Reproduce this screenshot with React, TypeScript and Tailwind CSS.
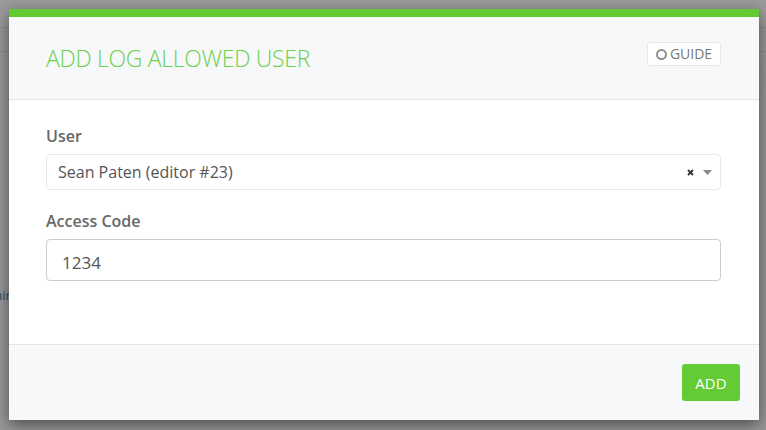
import React from "react";

export default function App() {
  return (
    <div
      className="relative w-[766px] h-[430px] overflow-hidden bg-[#999999]"
      style={{ fontFamily: '"Open Sans", "Liberation Sans", sans-serif' }}
    >
      {/* dimmed page behind the modal */}
      <div className="flex flex-col">
        <div className="h-[28px] border-b border-[#8e8e8e] bg-[#9b9b9b]" />
        <div className="h-[24px] border-b border-[#8e8e8e] bg-[#999999]" />
        <div className="flex justify-end pt-[13px] pr-[2px]">
          <div className="w-[40px] h-[24px] rounded-[3px] border border-[#8f8f8f]" />
        </div>
        <div className="pt-[198px] -ml-[26px] text-[13px] leading-[16px] text-[#2f4a66]">
          Admin
        </div>
      </div>

      {/* modal */}
      <div className="absolute left-[9px] top-[9px] w-[750px] flex flex-col bg-white shadow-[0_5px_15px_rgba(0,0,0,0.5)]">
        <div className="h-[8px] bg-[#62cb31]" />

        <div className="h-[83px] border-b border-[#e4e5e7] bg-[#f7f8fa] flex justify-between pl-[37px] pr-[38px]">
          <h1 className="self-center text-[23px] leading-[31px] font-light text-[#6bd04a] tracking-[-0.3px]">
            ADD LOG ALLOWED USER
          </h1>
          <button className="mt-[25px] h-[24px] w-[74px] flex items-center justify-center gap-[3px] rounded-[3px] border border-[#e6e6e6] bg-white text-[14px] leading-[20px] text-[#777777]">
            <span className="inline-block w-[11px] h-[11px] rounded-full border-2 border-[#8f8f8f]" />
            <span>GUIDE</span>
          </button>
        </div>

        <div className="h-[244px] flex flex-col pt-[25px] pl-[37px] pr-[38px]">
          <label className="text-[16px] leading-[22px] font-semibold text-[#676767]">
            User
          </label>
          <div className="mt-[7px] h-[36px] flex items-center justify-between rounded-[4px] border border-[#e7e7e7] pl-[11px] pr-[8px]">
            <span className="text-[16px] leading-[20px] text-[#555555]">
              Sean Paten (editor #23)
            </span>
            <div className="flex items-center gap-[9px]">
              <svg width="7" height="7" viewBox="0 0 7 7">
                <path d="M1 1 L6 6 M6 1 L1 6" stroke="#333" strokeWidth="1.8" />
              </svg>
              <svg width="9" height="5" viewBox="0 0 9 5">
                <path d="M0 0 H9 L4.5 5 Z" fill="#888888" />
              </svg>
            </div>
          </div>

          <label className="mt-[20px] text-[16px] leading-[22px] font-semibold text-[#676767]">
            Access Code
          </label>
          <input
            readOnly
            defaultValue="1234"
            className="mt-[7px] h-[42px] w-full rounded-[4px] border border-[#cccccc] pl-[15px] pt-[4px] text-[17px] text-[#555555] outline-none"
          />
        </div>

        <div className="h-[76px] border-t border-[#e4e5e7] bg-[#f7f8fa] flex justify-end items-start pt-[19px] pr-[19px]">
          <button className="h-[37px] w-[58px] rounded-[3px] bg-[#63cb33] text-white text-[15px] leading-[20px]">
            ADD
          </button>
        </div>
      </div>
    </div>
  );
}
